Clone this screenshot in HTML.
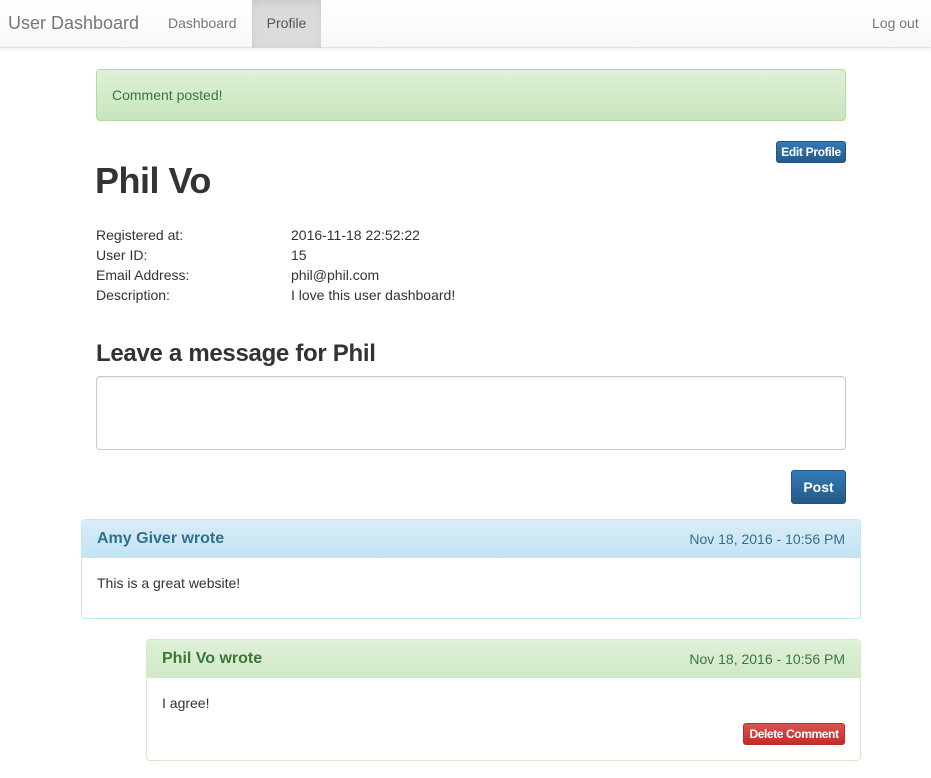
<!DOCTYPE html>
<html><head><style>
*{box-sizing:border-box;margin:0;padding:0}
body{width:931px;height:778px;overflow:hidden;font-family:"Liberation Sans",sans-serif;font-size:14px;color:#333;background:#fff;position:relative}
.nav{position:absolute;left:0;top:0;width:931px;height:48px;background:linear-gradient(#fff,#f8f8f8);border-bottom:1px solid #e2e2e2;box-shadow:0 1px 5px rgba(0,0,0,.08)}
.nav span{position:absolute;top:0;line-height:46px;color:#777}
.abs{position:absolute}
.alert{left:96px;top:69px;width:750px;height:52px;border:1px solid #b2dba1;border-radius:4px;background:linear-gradient(#dff0d8,#c8e5bc);color:#3c763d;padding:17px 15px;line-height:16px}
.btn{color:#fff;border-radius:3px;text-align:center;background:linear-gradient(#337ab7,#265a88);border:1px solid #245580}
.panel{border-radius:4px;border:1px solid}
.ph{height:38px;padding:0 15px;line-height:38px;font-size:16px;border-bottom:1px solid;border-radius:3px 3px 0 0}
.ph b{font-weight:bold}
.ph i{float:right;font-style:normal;font-size:14px}
</style></head><body>
<div class="nav">
<span style="left:8px;font-size:18px">User Dashboard</span>
<span style="left:168px">Dashboard</span>
<span style="left:252px;width:69px;height:48px;background:#dbdbdb;text-align:center;color:#555;box-shadow:inset 0 3px 9px rgba(0,0,0,.08)">Profile</span>
<span style="left:872px">Log out</span>
</div>
<div class="abs alert">Comment posted!</div>
<div class="abs btn" style="left:776px;top:141px;width:70px;height:22px;font-size:12px;line-height:20px;font-weight:bold;letter-spacing:-0.3px">Edit Profile</div>
<div class="abs" style="left:95px;top:159px;font-size:36px;font-weight:bold;line-height:44px;letter-spacing:-0.5px">Phil Vo</div>
<div class="abs" style="left:96px;top:225px;line-height:20px">Registered at:<br>User ID:<br>Email Address:<br>Description:</div>
<div class="abs" style="left:291px;top:225px;line-height:20px">2016-11-18 22:52:22<br>15<br>phil@phil.com<br>I love this user dashboard!</div>
<div class="abs" style="left:96px;top:339px;font-size:24px;font-weight:bold;line-height:30px;letter-spacing:-0.3px">Leave a message for Phil</div>
<div class="abs" style="left:96px;top:376px;width:750px;height:74px;border:1px solid #ccc;border-radius:4px;box-shadow:inset 0 1px 1px rgba(0,0,0,.075)"></div>
<div class="abs btn" style="left:791px;top:470px;width:55px;height:34px;line-height:32px;font-size:14px;font-weight:bold">Post</div>
<div class="abs panel" style="left:81px;top:519px;width:780px;height:100px;border-color:#bce8f1">
<div class="ph" style="background:linear-gradient(#d9edf7,#c4e3f3);border-color:#bce8f1;color:#31708f"><b>Amy Giver wrote</b><i>Nov 18, 2016 - 10:56 PM</i></div>
<div style="padding:17px 15px">This is a great website!</div>
</div>
<div class="abs panel" style="left:146px;top:639px;width:715px;height:122px;border-color:#d6e9c6">
<div class="ph" style="background:linear-gradient(#dff0d8,#d0e9c6);border-color:#d6e9c6;color:#3c763d"><b>Phil Vo wrote</b><i>Nov 18, 2016 - 10:56 PM</i></div>
<div style="padding:17px 15px">I agree!</div>
<div class="abs" style="right:15px;top:83px;width:102px;height:22px;border-radius:3px;background:linear-gradient(#d9534f,#c12e2a);border:1px solid #b92c28;color:#fff;font-size:12px;line-height:20px;text-align:center;font-weight:bold;letter-spacing:-0.4px">Delete Comment</div>
</div>
</body></html>
